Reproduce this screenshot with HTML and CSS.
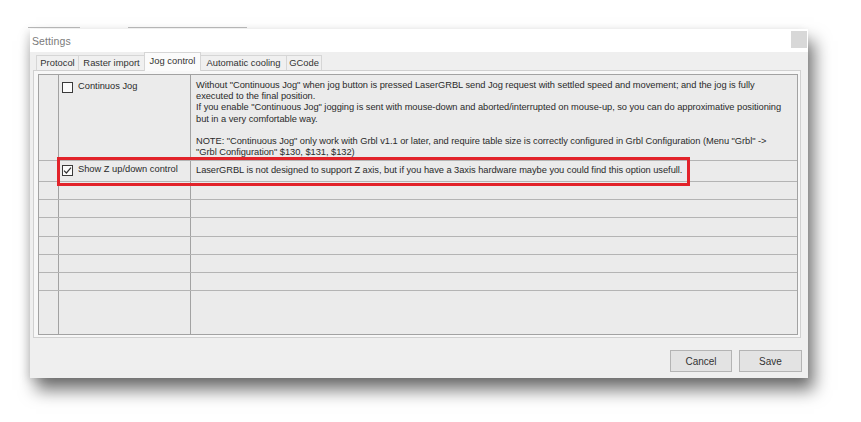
FILE: index.html
```html
<!DOCTYPE html>
<html>
<head>
<meta charset="utf-8">
<link rel="stylesheet" href="styles.css">
</head>
<body>
<div class="backdrop">
  <span class="seg seg-a"></span>
  <span class="seg seg-b"></span>
</div>
<div class="window">
  <div class="titlebar">
    <span class="title">Settings</span>
    <span class="close"></span>
  </div>
  <div class="tabs">
    <div class="tab">Protocol</div>
    <div class="tab">Raster import</div>
    <div class="tab active">Jog control</div>
    <div class="tab">Automatic cooling</div>
    <div class="tab">GCode</div>
  </div>
  <div class="panel">
    <div class="grid">
      <div class="row row-tall">
        <div class="hdr"></div>
        <div class="opt">
          <span class="check"></span>
          <span class="label">Continuos Jog</span>
        </div>
        <div class="desc">
          Without "Continuous Jog" when jog button is pressed LaserGRBL send Jog request with settled speed and movement; and the jog is fully<br>
          executed to the final position.<br>
          If you enable "Continuous Jog" jogging is sent with mouse-down and aborted/interrupted on mouse-up, so you can do approximative positioning<br>
          but in a very comfortable way.<br>
          <br>
          NOTE: "Continuous Jog" only work with Grbl v1.1 or later, and require table size is correctly configured in Grbl Configuration (Menu "Grbl" -&gt;<br>
          "Grbl Configuration" $130, $131, $132)
        </div>
      </div>
      <div class="row row-z">
        <div class="hdr"></div>
        <div class="opt">
          <span class="check checked">
            <svg viewBox="0 0 11 11" width="11" height="11"><path d="M2 5.6 L4.4 8 L9 2.6" fill="none" stroke="#333" stroke-width="1.2"/></svg>
          </span>
          <span class="label">Show Z up/down control</span>
        </div>
        <div class="desc">LaserGRBL is not designed to support Z axis, but if you have a 3axis hardware maybe you could find this option usefull.</div>
      </div>
      <div class="row empty"><div class="hdr"></div><div class="opt"></div><div class="desc"></div></div>
      <div class="row empty"><div class="hdr"></div><div class="opt"></div><div class="desc"></div></div>
      <div class="row empty"><div class="hdr"></div><div class="opt"></div><div class="desc"></div></div>
      <div class="row empty"><div class="hdr"></div><div class="opt"></div><div class="desc"></div></div>
      <div class="row empty"><div class="hdr"></div><div class="opt"></div><div class="desc"></div></div>
      <div class="row empty"><div class="hdr"></div><div class="opt"></div><div class="desc"></div></div>
      <div class="row filler"><div class="hdr"></div><div class="opt"></div><div class="desc"></div></div>
      <div class="highlight"></div>
    </div>
  </div>
  <div class="footer">
    <button class="btn btn-cancel">Cancel</button>
    <button class="btn btn-save">Save</button>
  </div>
</div>
</body>
</html>
```
FILE: styles.css
```css
html, body {
  margin: 0;
  padding: 0;
  background: #ffffff;
}
body {
  font-family: "Liberation Sans", Arial, sans-serif;
  color: #2a2a2a;
  width: 861px;
  height: 422px;
  overflow: hidden;
}
.backdrop {
  height: 29px;
  display: flex;
  align-items: flex-end;
}
.seg {
  height: 1px;
  background: #b5b5b5;
  margin-bottom: 1px;
}
.seg-a { width: 52px; margin-left: 28px; }
.seg-b { width: 119px; margin-left: 48px; }

.window {
  margin-left: 30px;
  width: 778px;
  height: 349px;
  background: #efefef;
  display: flex;
  flex-direction: column;
  box-shadow: 6px 12px 16px rgba(0, 0, 0, 0.55), -3px 2px 8px rgba(0, 0, 0, 0.1);
}
.titlebar {
  height: 23px;
  background: #ffffff;
  display: flex;
  justify-content: space-between;
  align-items: flex-start;
  flex-shrink: 0;
}
.title {
  font-size: 10.5px;
  color: #7a7a7a;
  padding-left: 2px;
  margin-top: 6px;
  letter-spacing: 0.1px;
}
.close {
  width: 16px;
  height: 17px;
  background: #d8d8d8;
  margin-top: 2px;
  margin-right: 1px;
}
.tabs {
  height: 18px;
  display: flex;
  align-items: flex-end;
  padding-left: 6px;
  flex-shrink: 0;
  position: relative;
  z-index: 1;
}
.tab {
  height: 14px;
  line-height: 14px;
  font-size: 9.4px;
  color: #333;
  border: 1px solid #d6d6d6;
  border-bottom: none;
  background: #f0f0f0;
  text-align: center;
  margin-right: -1px;
}
.tab:nth-child(1) { width: 41px; }
.tab:nth-child(2) { width: 65px; }
.tab:nth-child(3) { width: 55px; }
.tab:nth-child(4) { width: 85px; }
.tab:nth-child(5) { width: 34px; }
.tab.active {
  height: 18px;
  line-height: 16px;
  background: #fbfbfb;
  margin-bottom: -1px;
  position: relative;
}
.panel {
  margin: 0 7px 0 3px;
  height: 268px;
  box-sizing: border-box;
  border: 1px solid #d0d0d0;
  background: #f7f7f7;
  padding: 3px 2px 2px 4px;
  flex-shrink: 0;
  display: flex;
}
.grid {
  flex: 1;
  border: 1px solid #a2a2a2;
  background: #ebebeb;
  display: flex;
  flex-direction: column;
  position: relative;
}
.row {
  display: grid;
  grid-template-columns: 20px 132px 1fr;
  border-bottom: 1px solid #b4b4b4;
  font-size: 9.3px;
  line-height: 11.2px;
}
.hdr, .opt {
  border-right: 1px solid #a2a2a2;
}
.row-tall { height: 85px; }
.row-z { height: 20px; }
.empty { height: 17.2px; }
.filler {
  flex: 1;
  border-bottom: none;
}
.opt {
  display: flex;
  align-items: flex-start;
  padding-left: 3px;
}
.row-tall .opt { padding-top: 7px; }
.row-z .opt { padding-top: 4px; }
.check {
  width: 11px;
  height: 11px;
  box-sizing: border-box;
  border: 1px solid #3a3a3a;
  background: #fbfbfb;
  flex-shrink: 0;
  display: flex;
}
.check svg {
  margin: -1px;
}
.label {
  margin-left: 5px;
  margin-top: -1px;
  white-space: nowrap;
}
.desc {
  padding-left: 5px;
  white-space: nowrap;
  overflow: hidden;
  letter-spacing: -0.04px;
}
.row-tall .desc { padding-top: 5px; }
.row-z .desc { padding-top: 4px; }

.highlight {
  position: absolute;
  left: 18px;
  top: 82px;
  width: 633px;
  height: 29px;
  box-sizing: border-box;
  border: 3.5px solid #e2232a;
  pointer-events: none;
}

.footer {
  display: flex;
  justify-content: flex-end;
  gap: 7px;
  padding: 12px 6px 0 0;
}
.btn {
  height: 22px;
  box-sizing: border-box;
  border: 1px solid #b4b4b4;
  background: #e3e3e3;
  font-family: "Liberation Sans", Arial, sans-serif;
  font-size: 10px;
  color: #333;
  padding: 0;
}
.btn-cancel { width: 62px; }
.btn-save { width: 63px; }
```
